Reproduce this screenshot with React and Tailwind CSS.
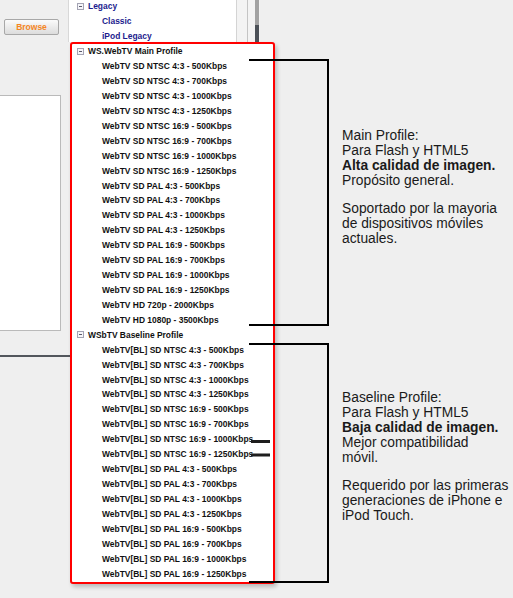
import React from "react";

const legacyItems = ["Classic", "iPod Legacy"];

const sizes = ["500", "700", "1000", "1250"];

function profileItems(prefix, extra = []) {
  const out = [];
  for (const std of ["NTSC", "PAL"]) {
    for (const ratio of ["4:3", "16:9"]) {
      for (const s of sizes) out.push(`${prefix} SD ${std} ${ratio} - ${s}Kbps`);
    }
  }
  return out.concat(extra);
}

const mainItems = profileItems("WebTV", [
  "WebTV HD 720p - 2000Kbps",
  "WebTV HD 1080p - 3500Kbps",
]);
const baselineItems = profileItems("WebTV[BL]");

function Expander() {
  return (
    <span className="flex h-[7px] w-[7px] shrink-0 items-center justify-center border border-[#a4a4b4] bg-[#f6f6fa]">
      <span className="h-px w-[3px] bg-[#5a5a6a]" />
    </span>
  );
}

function GroupRow({ label, color, pad }) {
  return (
    <div className={`flex h-[14.93px] items-center gap-[4px] ${pad}`}>
      <Expander />
      <span className={`whitespace-nowrap text-[8.45px] font-bold leading-none ${color}`}>
        {label}
      </span>
    </div>
  );
}

function ItemRow({ label, color, pad }) {
  return (
    <div
      className={`flex h-[14.93px] items-center whitespace-nowrap text-[8.45px] font-bold leading-none ${color} ${pad}`}
    >
      {label}
    </div>
  );
}

export default function App() {
  return (
    <div className="relative flex h-[598px] w-[513px] overflow-hidden bg-[#efefef] font-['Liberation_Sans',Arial,sans-serif]">
      {/* left pane: browse button, file list and splitter */}
      <div className="flex w-[68px] shrink-0 flex-col">
        <button
          type="button"
          className="ml-[4px] mt-[19px] h-[16px] w-[55px] rounded-[2px] border border-[#a8a8a8] bg-gradient-to-b from-[#fbfbfb] to-[#dcdcdc] text-[8.5px] font-bold text-[#f5861f]"
        >
          Browse
        </button>
        <div className="mt-[60px] h-[236px] w-[61px] border-y border-r border-[#bababa] bg-white" />
        <div className="mt-[24px] h-[2px] w-[70px] bg-[#52565c]" />
      </div>

      {/* profile tree */}
      <div className="flex w-[207px] shrink-0 flex-col">
        <div className="flex h-[42px]">
          <div className="-mt-px w-[168px] border-l border-[#d8d8d8] bg-white">
            <GroupRow label="Legacy" color="text-[#1c1c8e]" pad="pl-[8px]" />
            {legacyItems.map((t) => (
              <ItemRow key={t} label={t} color="text-[#1c1c8e]" pad="pl-[33px]" />
            ))}
          </div>
          <div className="flex w-[24px] border-l border-[#d4d4d4] bg-[#f3f3f3]">
            <div className="ml-[10px] w-px bg-[#c4c4c4]" />
            <div className="ml-[7px] flex w-[4px] flex-col">
              <div className="h-[25px] bg-[#a2a2a2]" />
              <div className="h-[17px] bg-[#4c5158]" />
            </div>
          </div>
        </div>

        <div className="relative z-10 ml-[2px] h-[542px] w-[205px] rounded-[3px] border-2 border-[#ff0000] bg-white shadow-[2px_3px_4px_rgba(0,0,0,0.22)]">
          <GroupRow label="WS.WebTV Main Profile" color="text-[#111]" pad="pl-[5px]" />
          {mainItems.map((t) => (
            <ItemRow key={t} label={t} color="text-[#111]" pad="pl-[30px]" />
          ))}
          <GroupRow label="WSbTV Baseline Profile" color="text-[#111]" pad="pl-[5px]" />
          {baselineItems.map((t) => (
            <ItemRow key={t} label={t} color="text-[#111]" pad="pl-[30px]" />
          ))}
        </div>
      </div>

      {/* notes */}
      <div className="flex flex-1 flex-col whitespace-nowrap pl-[67px] pt-[128px] text-[13.8px] leading-[15px] text-[#1a1a1a]">
        <p>
          Main Profile:
          <br />
          Para Flash y HTML5
          <br />
          <b>Alta calidad de imagen.</b>
          <br />
          Propósito general.
        </p>
        <p className="mt-[13px]">
          Soportado por la mayoria
          <br />
          de dispositivos móviles
          <br />
          actuales.
        </p>

        <p className="mt-[144px]">
          Baseline Profile:
          <br />
          Para Flash y HTML5
          <br />
          <b>Baja calidad de imagen.</b>
          <br />
          Mejor compatibilidad
          <br />
          móvil.
        </p>
        <p className="mt-[13px]">
          Requerido por las primeras
          <br />
          generaciones de iPhone e
          <br />
          iPod Touch.
        </p>
      </div>

      {/* brackets tying each profile to its note */}
      <svg
        className="pointer-events-none absolute inset-0 z-20"
        width="513"
        height="598"
        viewBox="0 0 513 598"
      >
        <path d="M249 60H328V325H249" fill="none" stroke="#000" strokeWidth="2" />
        <path d="M249 344H328V582H249" fill="none" stroke="#000" strokeWidth="2" />
        <rect x="251" y="440" width="19" height="3" fill="#1e1e1e" />
        <rect x="251" y="453.5" width="19" height="3" fill="#1e1e1e" />
      </svg>
    </div>
  );
}
